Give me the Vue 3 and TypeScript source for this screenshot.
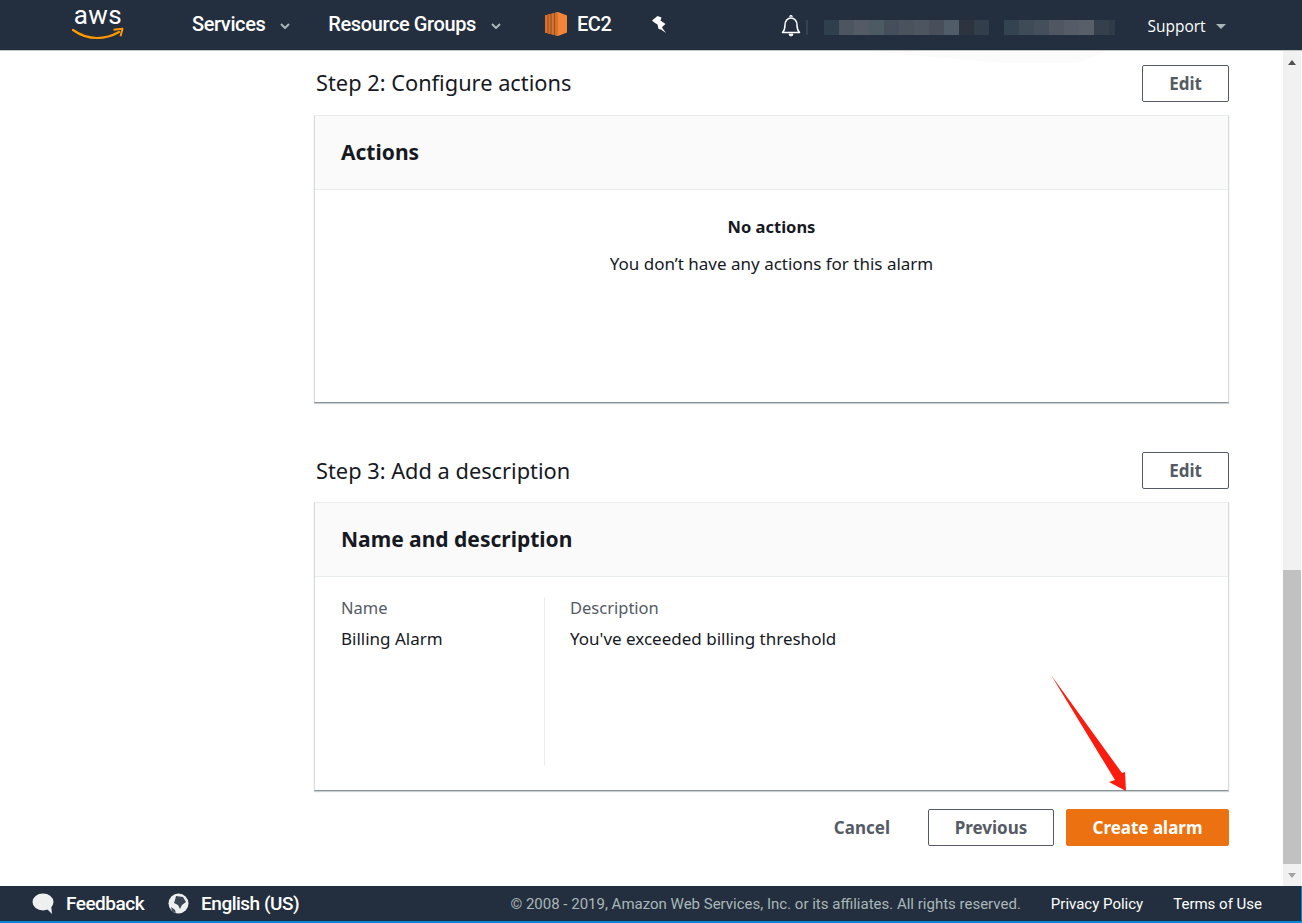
<script setup lang="ts">
// pixelated blur over the account name in the nav bar
const blurLeft = ["#2f3f4c", "#4d5560", "#545b66", "#4c5a64", "#454e5b", "#4a525d", "#4d5560", "#484f5b", "#505c67", "#2d3440", "#323f4a"];
const blurRight = ["#33434f", "#3f4b57", "#454f5b", "#505763", "#565c67", "#585f68", "#35404c", "#2f3b48"];

const footerLinks = ["Privacy Policy", "Terms of Use"];
</script>

<template>
  <div class="page">
    <header class="topbar">
      <div class="aws-logo">
        <span class="aws-word">aws</span>
        <svg width="52" height="14" viewBox="0 0 52 14">
          <path d="M1 4c7 5 15 8 24 8 8 0 15-2 22-6" fill="none" stroke="#f90" stroke-width="2.200" stroke-linecap="round" />
          <path d="M41.500 3.800l9-1-2 7.500" fill="none" stroke="#f90" stroke-width="2" stroke-linejoin="round" />
        </svg>
      </div>
      <a class="nav-item services">Services<svg class="chev" width="10" height="6" viewBox="0 0 10 6"><path d="M1 1l4 4 4-4" fill="none" stroke="#aab7b8" stroke-width="2" /></svg></a>
      <a class="nav-item groups">Resource Groups<svg class="chev" width="10" height="6" viewBox="0 0 10 6"><path d="M1 1l4 4 4-4" fill="none" stroke="#aab7b8" stroke-width="2" /></svg></a>
      <a class="nav-item ec2">
        <svg width="22" height="24" viewBox="0 0 22 24">
          <path d="M13 0l9 3.500v17L13 24 0 20.500v-17z" fill="#f58536" />
          <path d="M13 0v24L0 20.500v-17z" fill="#d9722b" />
          <path d="M3 3v18M6 2v20M9.500 1v22" stroke="#9d5025" stroke-width="1.200" />
        </svg>
        EC2
      </a>
      <svg class="pin" width="15" height="17" viewBox="0 0 15 17">
        <path d="M0 4.500L5.500 0l4 1.500-1 3L13.500 8l-3.500 3 1 2 3 4-5-3.500-2.500-.5-1-4.500-2.500-1.500z" fill="#fff" />
      </svg>
      <svg class="bell" width="20" height="22" viewBox="0 0 20 22">
        <path d="M1.500 17.500c2-2 2.500-4 2.500-7.500 0-4 2.500-7 6-7s6 3 6 7c0 3.500.5 5.500 2.500 7.500z" fill="none" stroke="#fff" stroke-width="1.500" stroke-linejoin="round" />
        <path d="M8.500 1.800a1.500 1.500 0 0 1 3 0M8 19h4a2 2 0 0 1-4 0z" fill="#fff" stroke="#fff" stroke-width="0.800" />
      </svg>
      <span class="sliver"></span>
      <div class="blur blur-left">
        <span v-for="(c, i) in blurLeft" :key="i" :style="{ background: c }"></span>
      </div>
      <div class="blur blur-right">
        <span v-for="(c, i) in blurRight" :key="i" :style="{ background: c }"></span>
      </div>
      <a class="support">Support<svg width="10" height="5" viewBox="0 0 10 5"><path d="M0 0h10L5 5z" fill="#aab7b8" /></svg></a>
    </header>

    <div class="middle">
      <main class="content">
        <section class="step">
          <div class="step-head">
            <h2>Step 2: Configure actions</h2>
            <button class="btn btn-normal">Edit</button>
          </div>
          <div class="card">
            <div class="card-head"><h3>Actions</h3></div>
            <div class="card-body empty">
              <strong>No actions</strong>
              <p>You don’t have any actions for this alarm</p>
            </div>
          </div>
        </section>

        <section class="step step-3">
          <div class="step-head">
            <h2>Step 3: Add a description</h2>
            <button class="btn btn-normal">Edit</button>
          </div>
          <div class="card">
            <div class="card-head"><h3>Name and description</h3></div>
            <div class="card-body columns">
              <div class="col col-name">
                <div class="label">Name</div>
                <div class="value">Billing Alarm</div>
              </div>
              <div class="col col-desc">
                <div class="label">Description</div>
                <div class="value">You've exceeded billing threshold</div>
              </div>
            </div>
          </div>
        </section>

        <div class="actions">
          <button class="btn btn-link">Cancel</button>
          <button class="btn btn-normal btn-prev">Previous</button>
          <button class="btn btn-primary">Create alarm</button>
        </div>
      </main>

      <div class="scrollbar">
        <div class="arrow-up"></div>
        <div class="track"><div class="thumb"></div></div>
        <div class="arrow-down"></div>
      </div>

      <svg class="smudge" width="240" height="13" viewBox="0 0 240 13">
        <path d="M0 0h240l-29 12h-76z" fill="#fbfbfb" />
      </svg>

      <svg class="red-arrow" width="80" height="125" viewBox="0 0 80 125">
        <path d="M1 1L72 99l3-1 1 19-17-9 6-2z" fill="#fb1c10" />
      </svg>
    </div>

    <footer class="footer">
      <a class="foot-main feedback">
        <svg width="24" height="24" viewBox="0 0 24 24">
          <ellipse cx="12" cy="10" rx="10.500" ry="8.500" fill="#eef0f0" />
          <path d="M14 15l7 7-1-10z" fill="#eef0f0" />
        </svg>
        Feedback
      </a>
      <a class="foot-main lang">
        <svg width="21" height="21" viewBox="0 0 21 21">
          <circle cx="10.500" cy="10.500" r="10" fill="#eef0f0" />
          <path d="M8 3l7 1 3 5-4 3-2 4-2-4-4-2 1-3zM3 14l4 3 1 3-4-2z" fill="#3a4654" />
        </svg>
        English (US)
      </a>
      <span class="copyright">© 2008 - 2019, Amazon Web Services, Inc. or its affiliates. All rights reserved.</span>
      <a v-for="link in footerLinks" :key="link" class="foot-link">{{ link }}</a>
    </footer>
  </div>
</template>

<style scoped>
.page {
  width: 1302px;
  height: 923px;
  display: grid;
  grid-template-rows: 51px 1fr 37px;
  overflow: hidden;
  font-family: "Noto Sans", "Open Sans", sans-serif;
  color: #16191f;
  background: #fff;
}

.topbar {
  display: flex;
  align-items: center;
  background: #232f3e;
  border-bottom: 1px solid #c4c4c4;
  padding-left: 72px;
  font-family: Roboto, sans-serif;
  color: #fff;
  box-sizing: border-box;
}

.aws-logo {
  flex: none;
  width: 52px;
  height: 36px;
  margin-top: -6px;
  display: flex;
  flex-direction: column;
  align-items: center;
}

.aws-word {
  font-family: Roboto, sans-serif;
  font-size: 26px;
  letter-spacing: 0.5px;
  line-height: 22px;
  height: 22px;
  color: #fff;
}

.aws-logo svg {
  flex: none;
}

.nav-item {
  display: flex;
  align-items: center;
  font-size: 20px;
  font-weight: 500;
  letter-spacing: -0.4px;
  white-space: nowrap;
  margin-top: -2px;
}

.chev {
  margin-left: 15px;
  margin-top: 4px;
}

.services {
  margin-left: 68px;
}

.groups {
  margin-left: 38px;
}

.ec2 {
  margin-left: 44px;
  gap: 10px;
}

.pin {
  margin-left: 41px;
  margin-top: -2px;
}

.bell {
  margin-left: 114px;
  margin-top: 2px;
}

.sliver {
  width: 2px;
  height: 15px;
  margin-left: 5px;
  margin-top: 4px;
  background: #36434f;
}

.blur {
  display: flex;
  height: 15px;
  margin-top: 4px;
}

.blur span {
  width: 15px;
}

.blur-left {
  margin-left: 16px;
}

.blur-right {
  margin-left: 15px;
}

.blur-right span:last-child {
  width: 6px;
}

.support {
  display: flex;
  align-items: center;
  gap: 10px;
  margin-left: 32px;
  margin-top: 2px;
  font-family: "Open Sans", sans-serif;
  font-size: 15.500px;
}

.middle {
  position: relative;
  display: flex;
  min-height: 0;
}

.content {
  flex: 1;
  padding: 14px 54px 0 314px;
  min-width: 0;
}

.step-head {
  display: flex;
  align-items: center;
  justify-content: space-between;
  height: 37px;
  margin-bottom: 13px;
  padding-left: 2px;
}

.step-head h2 {
  margin: 0 0 3px;
  font-size: 21.800px;
  font-weight: 400;
}

.step-3 {
  margin-top: 49px;
}

.step-3 .step-head h2 {
  margin-bottom: 1px;
}

.btn {
  height: 37px;
  box-sizing: border-box;
  border-radius: 2px;
  font-family: "Noto Sans", "Open Sans", sans-serif;
  font-size: 17px;
  font-weight: 700;
  cursor: pointer;
}

.btn-normal {
  width: 87px;
  background: #fff;
  border: 1px solid #545b64;
  color: #545b64;
}

.btn-link {
  background: none;
  border: none;
  color: #545b64;
  padding: 0;
  margin-right: 38px;
}

.btn-prev {
  width: 126px;
  margin-right: 12px;
}

.btn-primary {
  width: 163px;
  background: #ec7211;
  border: 1px solid #ec7211;
  color: #fff;
}

.card {
  border-top: 1px solid #eaeded;
  border-left: 1px solid #d5dbdb;
  border-right: 1px solid #d5dbdb;
  border-bottom: 1px solid #879196;
  box-shadow: 0 1px 1px rgba(0, 28, 36, 0.2);
  background: #fff;
}

.card-head {
  height: 74px;
  box-sizing: border-box;
  display: flex;
  align-items: center;
  padding: 0 0 1px 26px;
  background: #fafafa;
  border-bottom: 1px solid #eaeded;
}

.card-head h3 {
  margin: 0;
  font-size: 21px;
  font-weight: 700;
}

.card-body {
  font-size: 17px;
}

.empty {
  height: 212px;
  box-sizing: border-box;
  padding-top: 26px;
  text-align: center;
}

.empty strong {
  display: block;
  font-size: 16.500px;
  line-height: 22px;
}

.empty p {
  margin: 15px 0 0;
  line-height: 22px;
}

.columns {
  display: grid;
  grid-template-columns: 203px 1fr;
  height: 213px;
  box-sizing: border-box;
  padding: 20px 0 25px 26px;
}

.col-desc {
  border-left: 1px solid #eaeded;
  padding-left: 25px;
}

.label {
  color: #545b64;
  font-size: 16.500px;
  line-height: 22px;
}

.value {
  margin-top: 9px;
  line-height: 22px;
}

.actions {
  display: flex;
  justify-content: flex-end;
  align-items: center;
  margin-top: 18px;
}

.scrollbar {
  flex: none;
  width: 18px;
  margin-right: 1px;
  display: flex;
  flex-direction: column;
  background: #f1f1f1;
}

.arrow-up,
.arrow-down {
  height: 22px;
  flex: none;
  display: flex;
  justify-content: center;
  align-items: center;
}

.arrow-up::before {
  content: "";
  border: 4px solid transparent;
  border-top: 0;
  border-bottom: 5px solid #505050;
}

.arrow-down::before {
  content: "";
  border: 4px solid transparent;
  border-bottom: 0;
  border-top: 5px solid #a3a3a3;
}

.track {
  flex: 1;
  display: flex;
  flex-direction: column;
  justify-content: flex-end;
}

.thumb {
  height: 294px;
  background: #c1c1c1;
}

.smudge {
  position: absolute;
  left: 867px;
  top: 0;
}

.red-arrow {
  position: absolute;
  left: 1050px;
  top: 623px;
}

.footer {
  display: flex;
  align-items: center;
  background: #232f3e;
  border-bottom: 2px solid #0a84d6;
  border-right: 1px solid #0a84d6;
  box-sizing: border-box;
  padding-left: 31px;
  font-family: Roboto, sans-serif;
  color: #fff;
}

.foot-main {
  display: flex;
  align-items: center;
  font-size: 19px;
  font-weight: 500;
  letter-spacing: -0.5px;
  gap: 11px;
}

.lang {
  margin-left: 24px;
  gap: 12px;
}

.copyright {
  margin-left: auto;
  font-size: 15px;
  color: #aab7b8;
}

.foot-link {
  margin-left: 30px;
  font-size: 15px;
  color: #fff;
}

.foot-link:last-child {
  margin-right: 39px;
}
</style>
